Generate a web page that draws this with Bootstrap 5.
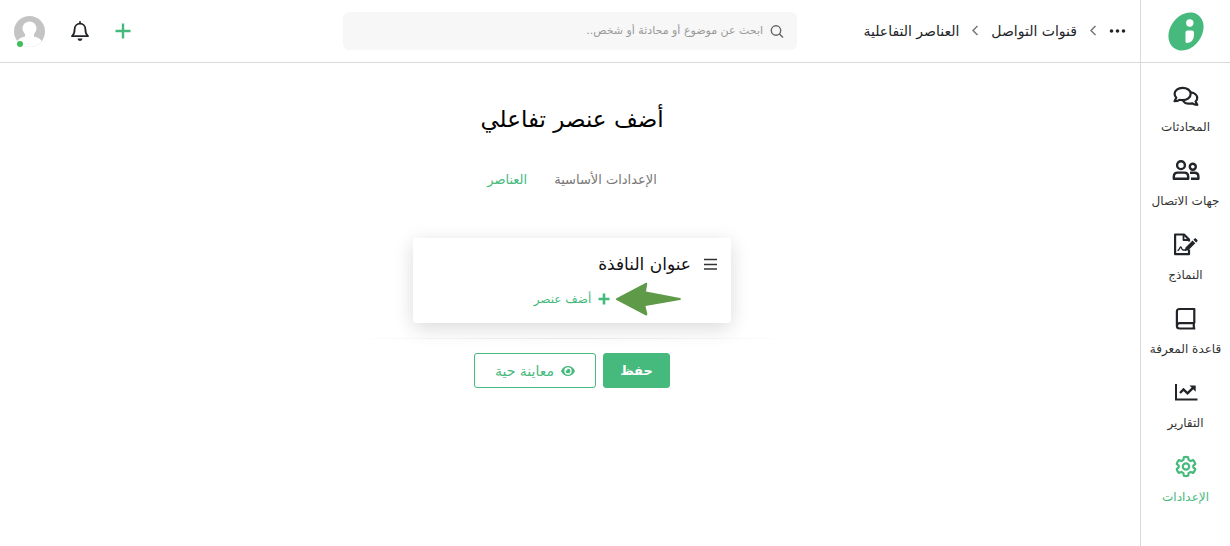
<!DOCTYPE html>
<html lang="ar" dir="rtl">
<head>
<meta charset="utf-8">
<meta name="viewport" content="width=device-width, initial-scale=1">
<title>أضف عنصر تفاعلي</title>
<link href="https://cdn.jsdelivr.net/npm/bootstrap@5.3.0/dist/css/bootstrap.min.css" rel="stylesheet">
<style>
  :root { --brand: #46b97c; --line: #d9d9d9; --ink: #212529; }
  body { font-family: "DejaVu Sans", sans-serif; font-size: 13px; line-height: 20px; color: var(--ink); background: #fff; }
  a { color: inherit; text-decoration: none; }
  svg { display: block; flex: none; }
  .brand-text { color: var(--brand); }
  .side { width: 90px; flex: none; border-left: 1px solid var(--line); }
  .side-logo { height: 63px; border-bottom: 1px solid var(--line); }
  .side-list { padding-top: 20px; gap: 20px; }
  .side-item { height: 54px; font-size: 12px; white-space: nowrap; color: #333; }
  .side-item svg { color: var(--ink); }
  .side-item.active, .side-item.active svg { color: var(--brand); }
  .topbar { height: 63px; border-bottom: 1px solid var(--line); display: grid; grid-template-columns: 1fr minmax(200px, 454px) 1fr; padding: 0 14px; }
  .crumbs { gap: 12px; font-size: 14px; white-space: nowrap; }
  .search { height: 38px; background: #f7f7f7; border-radius: 6px; padding: 0 13px; gap: 5px; color: #666; }
  .search input { font-size: 11px; background: transparent; border: 0; outline: 0; }
  .search input::placeholder { color: #999; opacity: 1; }
  .tools { gap: 26px; }
  .tools button, .plain { border: 0; background: none; padding: 0; }
  .avatar { position: relative; }
  .online { position: absolute; left: 3px; bottom: 0; width: 6px; height: 6px; border-radius: 50%; background: #3fbf5a; }
  .content-col { padding: 38px 0 0 4px; }
  .page-title { font-size: 23px; line-height: 36px; font-weight: 400; color: #000; margin: 0 0 33px; }
  .tabs { gap: 27px; line-height: 20px; color: #777; margin-bottom: 48px; }
  .panel { width: 318px; max-width: 100%; height: 85px; background: #fff; border-radius: 3px; padding: 12px 14px; box-shadow: 0 5px 20px rgba(0,0,0,.15); }
  .panel-title { font-size: 17px; line-height: 28px; gap: 13px; font-weight: 400; color: #111; margin: 0 0 12px; }
  .add-row { font-size: 12px; line-height: 18px; gap: 7px; position: relative; }
  .pointer { position: absolute; right: -72px; top: -8px; }
  .fade-line { width: 454px; max-width: 100%; height: 1px; margin: 15px 0 14px; background: linear-gradient(90deg, transparent, #e6e6e6, transparent); }
  .action { --bs-btn-font-size: 14px; --bs-btn-line-height: 20px; --bs-btn-padding-y: 0; --bs-btn-padding-x: 8px; --bs-btn-border-radius: 3px; --bs-btn-border-color: var(--brand); height: 35px; }
  .save { --bs-btn-font-size: 13px; --bs-btn-font-weight: 700; --bs-btn-bg: var(--brand); --bs-btn-color: #fff; --bs-btn-hover-bg: #3aa56c; --bs-btn-hover-color: #fff; width: 67px; }
  .preview { --bs-btn-color: var(--brand); --bs-btn-hover-color: var(--brand); --bs-btn-hover-border-color: var(--brand); width: 122px; gap: 7px; }
  .actions { gap: 7px; }
</style>
</head>
<body>
<div class="d-flex min-vh-100">
  <aside class="side">
    <a href="#" class="side-logo d-flex align-items-center justify-content-center" aria-label="الرئيسية">
      <svg width="36" height="40" viewBox="0 0 36 40"><ellipse cx="18" cy="20.500" rx="15.800" ry="20.500" transform="rotate(36 18 20.500)" fill="#46b97c"/><circle cx="21.800" cy="12" r="3.700" fill="#fff"/><path d="M17.500 21.500q0-2 2-2H24q2 0 2 2V24q0 7-7 8-1.500 0-1.500-1.500z" fill="#fff"/></svg>
    </a>
    <nav class="side-list d-flex flex-column">
      <a href="#" class="side-item d-flex flex-column align-items-center justify-content-between">
        <svg width="26" height="26" viewBox="0 0 26 26" fill="none" stroke="currentColor" stroke-width="2.200" stroke-linejoin="round"><path d="M9.500 4.800C5 4.800 1.600 7.500 1.600 10.800c0 1.600.6 2.900 1.700 4L1.500 18.200c2 0 3.800-.5 5-1.400.8.200 1.900.3 3 .3 4.700 0 8.200-2.800 8.200-6.300S14 4.800 9.500 4.800z"/><path d="M17.800 9.300c3.800.4 6.400 2.800 6.400 5.600 0 1.500-.6 2.700-1.600 3.700l1.700 3.200c-2 0-3.700-.6-4.900-1.500-4.300.9-8.300-.2-9.600-3.200"/></svg>
        <span>المحادثات</span></a>
      <a href="#" class="side-item d-flex flex-column align-items-center justify-content-between">
        <svg width="28" height="26" viewBox="0 0 28 26" fill="none" stroke="currentColor" stroke-width="2.400" stroke-linejoin="round"><circle cx="9" cy="8.200" r="3.900"/><path d="M1.800 21.800v-2c0-2.600 1.700-4.200 4-4.200h6.400c2.300 0 4 1.600 4 4.200v2z"/><circle cx="20.800" cy="9.800" r="3"/><path d="M18 15.800h4.500c2.400 0 3.900 1.500 3.900 3.900v2H19"/></svg>
        <span>جهات الاتصال</span></a>
      <a href="#" class="side-item d-flex flex-column align-items-center justify-content-between">
        <svg width="26" height="26" viewBox="0 0 26 26" fill="none" stroke="currentColor" stroke-width="2.200" stroke-linejoin="round"><path d="M16 18.500v4.700H2.100V3.500H11l5 5v2"/><path d="M10.500 3.500v5.500H16" stroke-width="1.800"/><path d="M4.500 19.500c2 0 2-3.500 3.200-3.500s.8 3 2.200 3h3" stroke-width="1.400"/><path d="M11.800 20l.7-3.500 7-7 2.800 2.800-7 7zM20.400 8.700l1-1c.5-.5 1.200-.5 1.700 0l1.100 1.100c.5.500.5 1.200 0 1.700l-1 1z" fill="currentColor" stroke="none"/></svg>
        <span>النماذج</span></a>
      <a href="#" class="side-item d-flex flex-column align-items-center justify-content-between">
        <svg width="26" height="26" viewBox="0 0 26 26" fill="none" stroke="currentColor" stroke-width="2.200" stroke-linejoin="round"><path d="M21.300 18.200V4H6.500C4.800 4 3.900 5 3.900 6.500V21c0 1.700 1 2.500 2.600 2.500h15.800M20.800 18v5.500M4 21c0-1.800 1-2.800 2.500-2.800h15"/></svg>
        <span>قاعدة المعرفة</span></a>
      <a href="#" class="side-item d-flex flex-column align-items-center justify-content-between">
        <svg width="26" height="26" viewBox="0 0 26 26" fill="none" stroke="currentColor" stroke-width="2"><path d="M3 5v15.500h21.500"/><path d="M7 14l3.500-3.500 4 3.800 5.500-5.500" stroke-width="2.400"/><path d="M16.500 6.500h6.200v6.200z" fill="currentColor" stroke="none"/></svg>
        <span>التقارير</span></a>
      <a href="#" class="side-item active d-flex flex-column align-items-center justify-content-between">
        <svg width="26" height="26" viewBox="0 0 26 26" fill="none" stroke="currentColor" stroke-width="2.200" stroke-linejoin="round"><path d="M10.800 4.300q2.200-.8 4.400 0l.4 2.600 2 1.200 2.500-1q1.700 1.700 2.200 3.900l-2 1.700v1.600l2 1.700q-.5 2.200-2.200 3.900l-2.500-1-2 1.200-.4 2.600q-2.200.8-4.400 0l-.4-2.600-2-1.200-2.500 1q-1.700-1.700-2.200-3.900l2-1.700v-1.600l-2-1.700q.5-2.200 2.200-3.900l2.500 1 2-1.200z"/><circle cx="13" cy="13.500" r="3.200"/></svg>
        <span>الإعدادات</span></a>
    </nav>
  </aside>
  <div class="flex-grow-1">
    <header class="topbar align-items-center">
      <nav class="crumbs d-flex align-items-center" aria-label="مسار التنقل">
        <a href="#" aria-label="المزيد"><svg width="17" height="16" viewBox="0 0 17 16" fill="currentColor"><circle cx="2.500" cy="8" r="1.800"/><circle cx="8.500" cy="8" r="1.800"/><circle cx="14.500" cy="8" r="1.800"/></svg></a>
        <svg width="8" height="12" viewBox="0 0 8 12" fill="none" stroke="#777" stroke-width="1.500"><path d="M6.500 1L2 5.500 6.500 10"/></svg>
        <a href="#">قنوات التواصل</a>
        <svg width="8" height="12" viewBox="0 0 8 12" fill="none" stroke="#777" stroke-width="1.500"><path d="M6.500 1L2 5.500 6.500 10"/></svg>
        <a href="#">العناصر التفاعلية</a>
      </nav>
      <label class="search d-flex align-items-center">
        <svg width="14" height="14" viewBox="0 0 14 14" fill="none" stroke="currentColor" stroke-width="1.400"><circle cx="6" cy="6.500" r="4.700"/><path d="M9.300 9.800l3.700 3.700"/></svg>
        <input type="search" class="flex-grow-1" aria-label="بحث" placeholder="ابحث عن موضوع أو محادثة أو شخص..">
      </label>
      <div class="tools d-flex align-items-center justify-content-end">
        <button type="button" aria-label="إضافة" class="brand-text"><svg width="16" height="16" viewBox="0 0 16 16" stroke="currentColor" stroke-width="2.400"><path d="M8 .5v15M.5 8h15"/></svg></button>
        <button type="button" aria-label="الإشعارات"><svg width="18" height="20" viewBox="0 0 18 20" fill="none" stroke="#212529" stroke-width="1.800" stroke-linejoin="round"><path d="M9 .3v2M1 15.200c2-1.700 2.600-3 2.600-6.700C3.600 5 5.800 2.700 9 2.700s5.400 2.300 5.400 5.800c0 3.700.6 5 2.600 6.700z"/><path d="M6.500 17.500h5a2.500 2.500 0 0 1-5 0z" fill="#212529" stroke="none"/></svg></button>
        <button type="button" aria-label="الحساب" class="avatar"><svg width="31" height="31" viewBox="0 0 31 31"><defs><clipPath id="round"><circle cx="15.500" cy="15.500" r="15.500"/></clipPath></defs><g clip-path="url(#round)"><path fill="#c4c4c4" d="M0 0h31v31H0z"/><circle cx="15.500" cy="12.500" r="7" fill="#fff"/><path fill="#fff" d="M11 17h9v3.500c5 1 8 3.500 8.500 7V31H2.500v-3.500c.5-3.500 3.500-6 8.500-7z"/></g></svg><span class="online"></span></button>
      </div>
    </header>
    <main class="content-col d-flex flex-column align-items-center">
      <h1 class="page-title">أضف عنصر تفاعلي</h1>
      <nav class="tabs d-flex">
        <a href="#">الإعدادات الأساسية</a>
        <a href="#" class="brand-text" aria-current="page">العناصر</a>
      </nav>
      <section class="panel">
        <h2 class="panel-title d-flex align-items-center">
          <svg width="13" height="12" viewBox="0 0 13 12" stroke="#333" stroke-width="1.500"><path d="M0 1.500h13M0 6.500h13M0 11h13"/></svg>
          عنوان النافذة</h2>
        <div class="d-flex justify-content-center">
          <button type="button" class="plain add-row brand-text d-flex align-items-center">
            <svg width="12" height="12" viewBox="0 0 12 12" stroke="currentColor" stroke-width="2.600"><path d="M6 .5v11M.5 6h11"/></svg>
            أضف عنصر
            <svg class="pointer" width="67" height="34" viewBox="0 0 67 34"><path d="M1.500 16.200L30.500 1q2-.8 1.700 1.200L31 9.500l34 6.500q2 1 0 2l-34.500 6L32.300 32q.3 2-1.800 1.200L1.500 18q-1.500-.9 0-1.800z" fill="#5f9a49"/></svg>
          </button>
        </div>
      </section>
      <div class="fade-line"></div>
      <div class="actions d-flex">
        <button type="button" class="btn action save">حفظ</button>
        <button type="button" class="btn action preview d-flex align-items-center justify-content-center">
          <svg width="14" height="10" viewBox="0 0 14 10"><path fill="currentColor" fill-rule="evenodd" d="M7 0c3 0 5.500 1.700 7 5-1.500 3.300-4 5-7 5S1.500 8.300 0 5c1.500-3.300 4-5 7-5zm0 1.300a3.700 3.700 0 1 0 0 7.400 3.700 3.700 0 0 0 0-7.400z"/><path fill="currentColor" d="M7 2.700A2.300 2.300 0 1 1 4.800 4.400c1 .5 2-.3 1.600-1.600.2-.1.400-.1.600-.1z"/></svg>
          معاينة حية</button>
      </div>
    </main>
  </div>
</div>
<script src="https://cdn.jsdelivr.net/npm/bootstrap@5.3.0/dist/js/bootstrap.bundle.min.js"></script>
</body>
</html>
